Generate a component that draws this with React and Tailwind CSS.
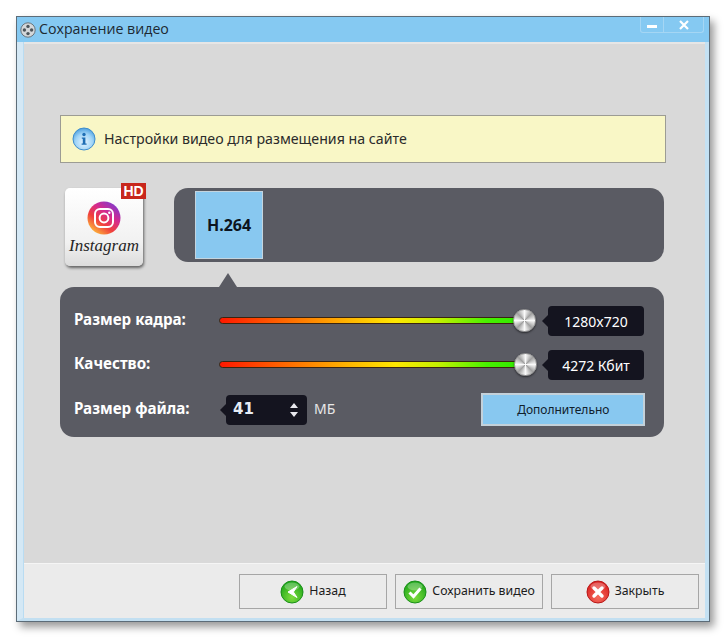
import React from 'react';

const tahoma = "font-['Noto_Sans','Open_Sans',sans-serif]";

function ReelIcon() {
  return (
    <svg width="16" height="16" viewBox="0 0 16 16" className="shrink-0">
      <circle cx="8" cy="8" r="7.2" fill="#d3d7da" stroke="#6b757c" strokeWidth="1" />
      <circle cx="8" cy="4.4" r="1.7" fill="#4c555b" />
      <circle cx="8" cy="11.6" r="1.7" fill="#4c555b" />
      <circle cx="4.4" cy="8" r="1.7" fill="#4c555b" />
      <circle cx="11.6" cy="8" r="1.7" fill="#4c555b" />
    </svg>
  );
}

function InfoIcon() {
  return (
    <svg width="24" height="24" viewBox="0 0 24 24" className="shrink-0">
      <defs>
        <radialGradient id="infoFill" cx="50%" cy="65%" r="65%">
          <stop offset="0%" stopColor="#e8f6ff" />
          <stop offset="60%" stopColor="#9fd4f7" />
          <stop offset="100%" stopColor="#4b9fdf" />
        </radialGradient>
      </defs>
      <circle cx="12" cy="12" r="11" fill="url(#infoFill)" stroke="#3f8dcc" strokeWidth="1" />
      <circle cx="12" cy="7.5" r="1.7" fill="#1f6fb5" />
      <path d="M9.8 10.4h3.6v6h1.2v1.4H9.6v-1.4h1.2v-4.6h-1z" fill="#1f6fb5" />
    </svg>
  );
}

function InstagramGlyph() {
  return (
    <svg width="34" height="34" viewBox="0 0 34 34">
      <defs>
        <linearGradient id="igFill" x1="15%" y1="95%" x2="85%" y2="5%">
          <stop offset="0%" stopColor="#fdc13a" />
          <stop offset="35%" stopColor="#f0403c" />
          <stop offset="65%" stopColor="#d52a8e" />
          <stop offset="100%" stopColor="#7c3bd0" />
        </linearGradient>
      </defs>
      <circle cx="17" cy="17" r="16.5" fill="url(#igFill)" />
      <rect x="8" y="8" width="18" height="18" rx="5" fill="none" stroke="#fff" strokeWidth="2" />
      <circle cx="17" cy="17" r="4.4" fill="none" stroke="#fff" strokeWidth="2" />
      <circle cx="22.3" cy="11.7" r="1.2" fill="#fff" />
    </svg>
  );
}

function RoundIcon({ id, light, dark, edge, children }) {
  return (
    <svg width="24" height="24" viewBox="0 0 24 24" className="shrink-0">
      <defs>
        <radialGradient id={id} cx="50%" cy="75%" r="75%">
          <stop offset="0%" stopColor={light} />
          <stop offset="100%" stopColor={dark} />
        </radialGradient>
      </defs>
      <circle cx="12" cy="12" r="11" fill={`url(#${id})`} stroke={edge} strokeWidth="1" />
      <ellipse cx="12" cy="6.5" rx="7.5" ry="4" fill="#ffffff" opacity="0.28" />
      {children}
    </svg>
  );
}

function SliderRow({ label, value, thumbClass }) {
  return (
    <div className="flex h-[30px] items-center">
      <div className={`mb-[3px] w-[145px] shrink-0 text-[15.2px] font-bold text-white ${tahoma}`}>{label}</div>
      <div className="relative mb-[2px] h-[7px] w-[305px] shrink-0 rounded-full border border-[#3a2410] bg-[linear-gradient(90deg,#ff1800_0%,#ff6a00_22%,#ffb400_42%,#ffe800_58%,#c4f000_72%,#48f000_88%,#2ee800_100%)]">
        <div className={`absolute top-[-9px] h-[23px] w-[23px] rounded-full border border-[#9a9a9a] bg-[conic-gradient(#fafafa,#a0a0a0_45deg,#fafafa_90deg,#a0a0a0_135deg,#fafafa_180deg,#a0a0a0_225deg,#fafafa_270deg,#a0a0a0_315deg,#fafafa)] shadow-[0_1px_2px_rgba(0,0,0,0.5)] ${thumbClass}`} />
      </div>
      <div className="relative ml-[24px] flex h-[30px] w-[96px] items-center justify-center rounded-[4px] bg-[#14141f] text-[14px] text-white">
        <span className="absolute left-[-6px] top-[9px] h-0 w-0 border-y-[6px] border-r-[6px] border-y-transparent border-r-[#14141f]" />
        <span className={tahoma}>{value}</span>
      </div>
    </div>
  );
}

function FooterButton({ icon, children }) {
  return (
    <button className="flex h-[35px] w-[148px] items-center justify-center gap-[5px] border border-[#a6a6a6] bg-[#ebebeb] text-[12.3px] text-[#1c1c1c]">
      {icon}
      <span className={tahoma}>{children}</span>
    </button>
  );
}

export default function App() {
  return (
    <div className="h-[638px] w-[726px] overflow-hidden bg-white pl-4 pt-4">
      <div className="flex h-[606px] w-[694px] flex-col border border-[#5c6c78] bg-[#b9dcf2] shadow-[4px_5px_8px_rgba(0,0,0,0.4)]">
        {/* title bar */}
        <div className="flex h-[25px] shrink-0 items-center justify-between bg-[#85c9f2] pl-[3px] pr-[5px]">
          <div className="flex items-center gap-[3px]">
            <ReelIcon />
            <span className="font-['Open_Sans',sans-serif] text-[14.2px] leading-none text-[#1d2a33]">Сохранение видео</span>
          </div>
          <div className="flex h-[16px] self-start">
            <div className="flex h-[16px] w-[24px] items-center justify-center rounded-bl-[3px] border-x border-b border-[#a5d6f4] bg-[#85c9f2] pt-[3px]">
              <span className="h-[3px] w-[10px] bg-white" />
            </div>
            <div className="flex h-[16px] w-[40px] items-center justify-center rounded-br-[3px] border-r border-b border-[#a5d6f4] bg-[#85c9f2]">
              <svg width="10" height="10" viewBox="0 0 10 10">
                <path d="M1 1l8 8M9 1l-8 8" stroke="#fff" strokeWidth="2.2" />
              </svg>
            </div>
          </div>
        </div>

        {/* body */}
        <div className="flex flex-1 flex-col border-b-[3px] border-l-[6px] border-r-[4px] border-b-[#c2dff1] border-l-[#d4e8f5] border-r-[#c4e1f3] pl-[1px]">
          <div className="h-[2px] shrink-0 bg-[#e6e6e6]" />
          <div className="flex-1 bg-[#d9d9d9] pl-[36px] pt-[71px]">
            {/* notice */}
            <div className="flex h-[48px] w-[606px] items-center gap-[8px] border border-[#9c9c94] bg-[#f9f7c6] pl-[11px]">
              <InfoIcon />
              <span className={`text-[14.2px] text-[#2b2b2b] ${tahoma}`}>Настройки видео для размещения на сайте</span>
            </div>

            {/* format row */}
            <div className="ml-[5px] mt-[25px] flex items-start gap-[31px]">
              <div className="relative flex h-[78px] w-[78px] flex-col items-center rounded-[5px] bg-[linear-gradient(180deg,#ffffff,#f1f1f1_70%,#dcdcdc)] pt-[13px] shadow-[1px_2px_3px_rgba(0,0,0,0.55)]">
                <InstagramGlyph />
                <span className="mt-[2px] font-['Liberation_Serif',serif] text-[17px] italic leading-none text-[#262626]">Instagram</span>
                <span className="absolute right-[-3px] top-[-5px] flex h-[16px] w-[25px] items-center justify-center bg-[#c8261c] font-['Liberation_Sans',sans-serif] text-[14px] font-bold leading-none text-white">HD</span>
              </div>
              <div className="flex h-[74px] w-[490px] items-center rounded-[14px] bg-[#5a5b63] pl-[21px]">
                <div className="flex h-[68px] w-[68px] items-center justify-center border border-[#c4d4de] bg-[#88c8f0] font-['Noto_Sans',sans-serif] text-[16px] font-bold text-[#0c1420]">
                  H.264
                </div>
              </div>
            </div>

            {/* settings panel */}
            <div className="relative mt-[21px] h-[150px] w-[604px] rounded-[14px] bg-[#5a5b63] pl-[14px] pt-[19px]">
              <span className="absolute left-[159px] top-[-14px] h-0 w-0 border-x-[9px] border-b-[14px] border-x-transparent border-b-[#5a5b63]" />
              <div className="flex flex-col gap-[14px]">
                <SliderRow label="Размер кадра:" value="1280x720" thumbClass="left-[293px]" />
                <SliderRow label="Качество:" value="4272 Кбит" thumbClass="left-[294px]" />
              </div>
              <div className="mt-[13px] flex items-center">
                <div className={`mb-[3px] w-[152px] shrink-0 text-[15.2px] font-bold text-white ${tahoma}`}>Размер файла:</div>
                <div className="relative flex h-[30px] w-[81px] items-center justify-between rounded-[4px] bg-[#14141f] pl-[7px] pr-[8px]">
                  <span className="absolute left-[-6px] top-[9px] h-0 w-0 border-y-[6px] border-r-[6px] border-y-transparent border-r-[#14141f]" />
                  <span className="font-['DejaVu_Sans',sans-serif] text-[15px] font-bold text-[#e6ecf5]">41</span>
                  <svg width="10" height="18" viewBox="0 0 10 18">
                    <path d="M5 2l4 5H1zM5 16l4-5H1z" fill="#e8e8ee" />
                  </svg>
                </div>
                <span className={`mb-[2px] ml-[7px] text-[14px] text-[#e8e8e8] ${tahoma}`}>МБ</span>
                <button className="ml-[146px] h-[33px] w-[164px] border-2 border-[#c3d1da] bg-[#88c8f0] text-[12px] text-[#10202c]">
                  <span className={tahoma}>Дополнительно</span>
                </button>
              </div>
            </div>
          </div>

          {/* footer */}
          <div className="flex h-[55px] shrink-0 items-start justify-end gap-[8px] border-t border-[#f5f5f5] bg-[#ebebeb] pr-[6px] pt-[10px]">
            <FooterButton
              icon={
                <RoundIcon id="backFill" light="#7ddc3c" dark="#18a218" edge="#1a8f1a">
                  <path d="M17 6.5L8 12l9 5.5-3.6-5.5z" fill="#fff" stroke="#fff" strokeWidth="1" strokeLinejoin="round" />
                </RoundIcon>
              }
            >
              Назад
            </FooterButton>
            <FooterButton
              icon={
                <RoundIcon id="saveFill" light="#7ddc3c" dark="#18a218" edge="#1a8f1a">
                  <path d="M6.5 12.5l4 4 7-8" fill="none" stroke="#fff" strokeWidth="3" />
                </RoundIcon>
              }
            >
              Сохранить видео
            </FooterButton>
            <FooterButton
              icon={
                <RoundIcon id="closeFill" light="#f56a5c" dark="#d81d1d" edge="#b81818">
                  <path d="M8 8l8 8M16 8l-8 8" stroke="#fff" strokeWidth="3.4" strokeLinecap="round" />
                </RoundIcon>
              }
            >
              Закрыть
            </FooterButton>
          </div>
        </div>
      </div>
    </div>
  );
}
